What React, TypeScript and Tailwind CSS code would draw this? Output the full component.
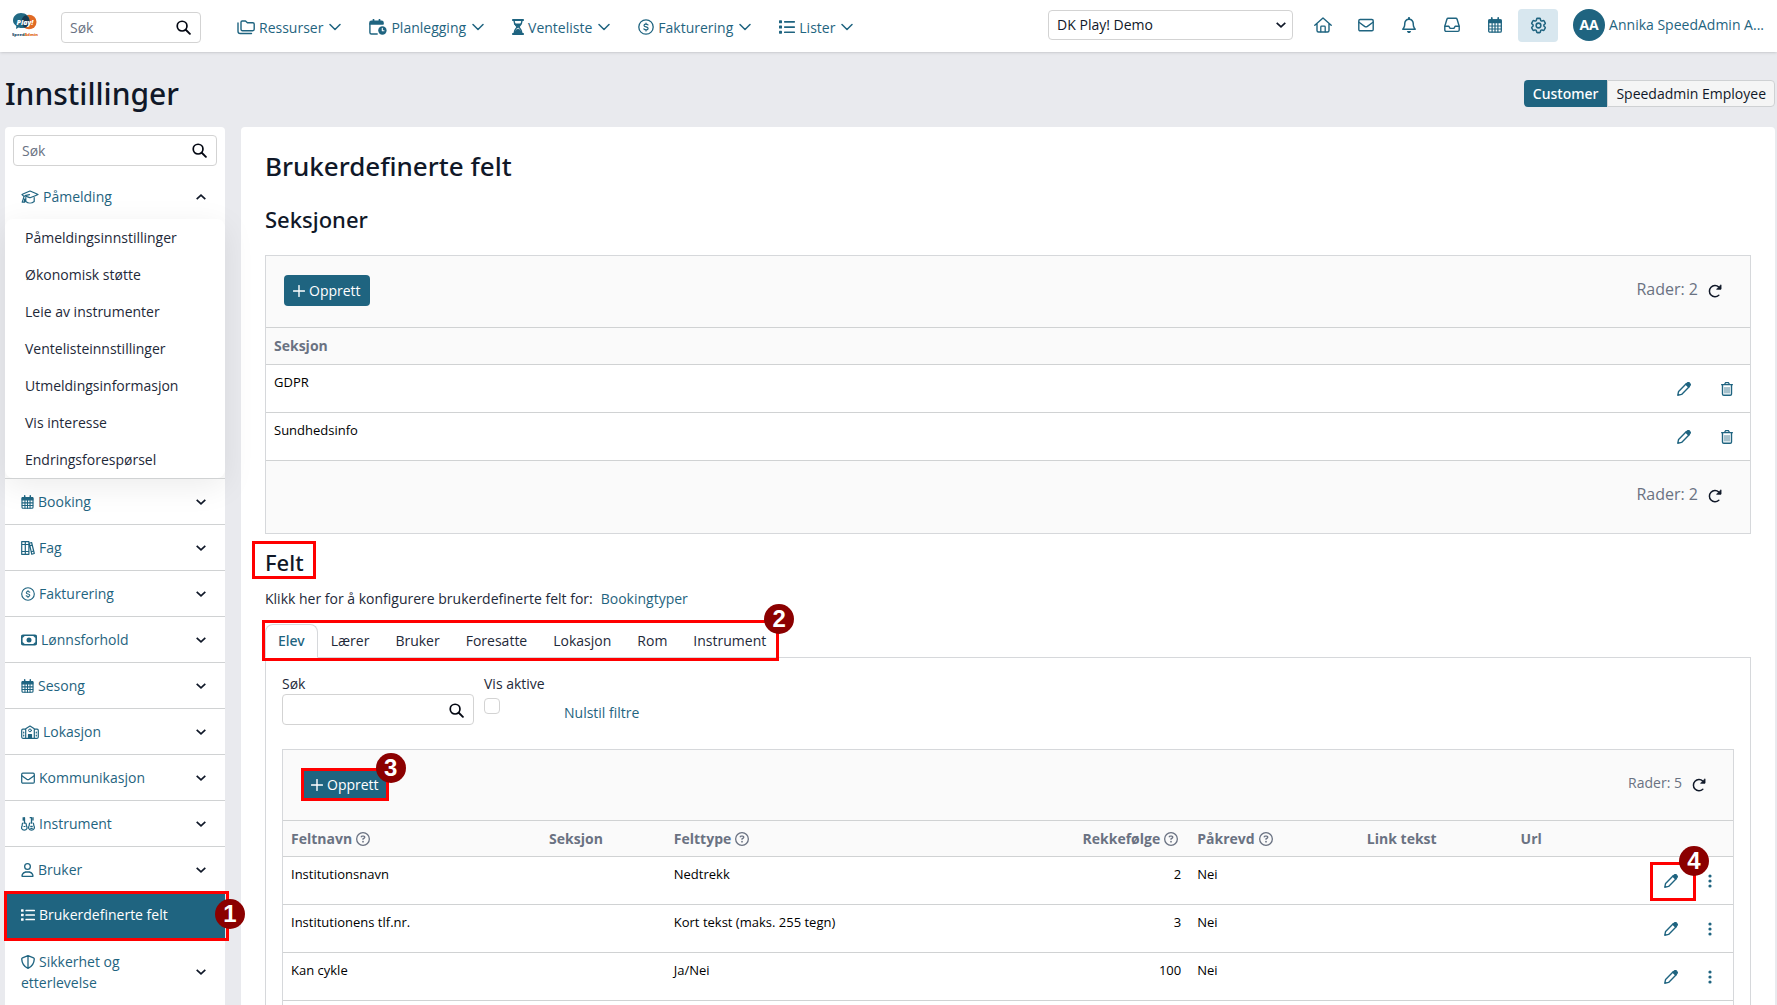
import type { ReactNode } from 'react';
import { FaRegBell, FaRegCircleQuestion, FaRegUser } from 'react-icons/fa6';
import { HiOutlineCog6Tooth } from 'react-icons/hi2';

interface IconProps {
  className?: string;
}

interface SvgProps extends IconProps {
  viewBox?: string;
  children: ReactNode;
}

function Svg({ className = 'w-4 h-4', viewBox = '0 0 16 16', children }: SvgProps) {
  return (
    <svg
      className={`shrink-0 ${className}`}
      viewBox={viewBox}
      fill="none"
      stroke="currentColor"
      strokeWidth="1.4"
      strokeLinecap="round"
      strokeLinejoin="round"
      aria-hidden="true"
    >
      {children}
    </svg>
  );
}

function SearchIcon({ className }: IconProps) {
  return (
    <Svg className={className}>
      <circle cx="6.5" cy="6.5" r="5.2" strokeWidth="1.8" />
      <path d="M10.4 10.4 14.8 14.8" strokeWidth="2" />
    </Svg>
  );
}

function FoldersIcon({ className = 'w-[18px] h-4' }: IconProps) {
  return (
    <Svg className={className} viewBox="0 0 18 16">
      <path d="M4 10V3.2C4 2.4 4.5 2 5.2 2h3.3l1.9 1.8h5.4c.8 0 1.4.5 1.4 1.3v5.2c0 .8-.6 1.4-1.4 1.4H5.4C4.6 11.7 4 11 4 10z" />
      <path d="M1 4v8.3c0 1.3.9 2.2 2.2 2.2h11.3" />
    </Svg>
  );
}

function CalendarClockIcon({ className = 'w-[18px] h-4' }: IconProps) {
  return (
    <Svg className={className} viewBox="0 0 18 16">
      <path d="M4.5 .8v2M10.5 .8v2" strokeWidth="1.8" />
      <path d="M.9 5V3.7c0-.9.6-1.5 1.5-1.5h10.2c.9 0 1.5.6 1.5 1.5V5z" fill="currentColor" />
      <path d="M.9 5v8.5c0 .9.6 1.5 1.5 1.5h5.8" />
      <circle cx="13.4" cy="11.5" r="4.2" fill="currentColor" stroke="none" />
      <path d="M13.3 9.3v2.4h1.7" stroke="white" strokeWidth="1.1" />
    </Svg>
  );
}

function HourglassIcon({ className = 'w-3 h-4' }: IconProps) {
  return (
    <Svg className={className} viewBox="0 0 12 16">
      <path d="M.8 1h10.4M.8 15h10.4" strokeWidth="1.8" />
      <path d="M2 1.500c0 3.500 1.500 4.500 3.200 6.500C3.500 10 2 11 2 14.500M10 1.500c0 3.500-1.500 4.500-3.200 6.500 1.700 2 3.200 3 3.200 6.500" />
      <path d="M3 5h6L6 8.500zM2.200 14.500c.3-2.500 1.800-3.500 3.800-4.500 2 1 3.500 2 3.800 4.500z" fill="currentColor" strokeWidth="1" />
    </Svg>
  );
}

function DollarIcon({ className }: IconProps) {
  return (
    <Svg className={className}>
      <circle cx="8" cy="8" r="7.2" strokeWidth="1.3" />
      <path d="M10 5.9C9.3 5.3 8.5 5.2 7.800 5.200c-1.100 0-1.800.5-1.800 1.300 0 2 4.100.8 4.100 2.900 0 .9-.8 1.400-1.900 1.400-.9 0-1.700-.3-2.300-.8M8 4v1.100M8 10.900V12" strokeWidth="1.2" />
    </Svg>
  );
}

function ListIcon({ className }: IconProps) {
  return (
    <Svg className={className}>
      <g fill="currentColor" stroke="none">
        <rect x="0" y="1.3" width="3" height="3" rx=".6" />
        <rect x="0" y="6.5" width="3" height="3" rx=".6" />
        <rect x="0" y="11.7" width="3" height="3" rx=".6" />
        <rect x="5" y="2" width="11" height="1.7" rx=".6" />
        <rect x="5" y="7.2" width="11" height="1.7" rx=".6" />
        <rect x="5" y="12.4" width="11" height="1.7" rx=".6" />
      </g>
    </Svg>
  );
}

function HomeIcon({ className = 'w-[18px] h-4' }: IconProps) {
  return (
    <Svg className={className} viewBox="0 0 18 16">
      <path d="M.8 8.2 9 .9l8.200 7.300M3 6.800v6.700c0 .9.6 1.5 1.5 1.5h9c.9 0 1.5-.6 1.5-1.500V6.800" />
      <path d="M6.800 14.800V10c0-.5.3-.8.8-.8h2.800c.5 0 .8.3.8.8v4.800" strokeWidth="1.3" />
    </Svg>
  );
}

function EnvelopeIcon({ className }: IconProps) {
  return (
    <Svg className={className}>
      <rect x=".8" y="2.5" width="14.4" height="11.3" rx="1.3" />
      <path d="M1 5.3 6.600 9.400c.9.6 1.900.6 2.800 0L15 5.300" />
    </Svg>
  );
}

function InboxIcon({ className }: IconProps) {
  return (
    <Svg className={className}>
      <path d="M.8 9.300 2.900 2.200c.2-.6.6-.9 1.200-.9h7.800c.6 0 1 .3 1.200.9l2.100 7.100v3.800c0 .8-.5 1.300-1.300 1.300H2.100c-.8 0-1.300-.5-1.300-1.300z" />
      <path d="M1 9.300h3.900l1.200 2.100h3.800l1.200-2.100H15" />
    </Svg>
  );
}

function CalendarIcon({ className = 'w-[14px] h-4' }: IconProps) {
  return (
    <Svg className={className} viewBox="0 0 14 16">
      <path d="M3.8 .9v2.500M10.200 .9v2.500" strokeWidth="1.7" />
      <rect x=".7" y="2.8" width="12.600" height="12.4" rx="1.2" strokeWidth="1.3" />
      <path d="M1 3h12v2.600H1z" fill="currentColor" />
      <path d="M1 9h12M1 12h12M4.100 6v9M7 6v9M9.900 6v9" strokeWidth="1.2" />
    </Svg>
  );
}

function GraduationIcon({ className = 'w-[18px] h-[14px]' }: IconProps) {
  return (
    <Svg className={className} viewBox="0 0 18 14">
      <path d="M2.600 6.100 1 4.500c2.600-1.300 5.300-2.300 8-3.500 2.700 1.200 5.300 2.200 8 3.500-2.600 1.300-5.300 2.300-8 3.300-1.600-.6-3-1.200-4.600-1.800" strokeWidth="1.2" />
      <path d="M8.500 4.600 4 5.700c-1.200.4-1.500 1.600-1.600 3l-1.200 3.500h2.400V9M4.800 7.500v4c2.400 2 6 2 8.400 0v-4" strokeWidth="1.2" />
    </Svg>
  );
}

function BooksIcon({ className = 'w-[14px] h-[14px]' }: IconProps) {
  return (
    <Svg className={className} viewBox="0 0 14 14">
      <path d="M.7 .7h3.600v12.600H.7zM4.300 .7h3.600v12.600H4.300zM.7 3.500h7.200M.7 10.500h7.200M8.300 2.300l2.300-.8 2.700 11-2.500.8zM8.900 4.800l2.300-.7M10.300 10.700l2.300-.7" strokeWidth="1.2" />
    </Svg>
  );
}

function MoneyIcon({ className = 'w-4 h-3' }: IconProps) {
  return (
    <Svg className={className} viewBox="0 0 16 12">
      <rect x=".8" y="1.2" width="14.4" height="9.6" rx="1.2" strokeWidth="1.6" />
      <circle cx="8" cy="6" r="2.5" fill="currentColor" stroke="none" />
      <path d="M1.200 3.500c1.100 0 2-.8 2-2h-2zM14.800 3.500c-1.100 0-2-.8-2-2h2zM1.200 8.500c1.100 0 2 .8 2 2h-2zM14.800 8.500c-1.100 0-2 .8-2 2h2z" fill="currentColor" strokeWidth=".6" />
    </Svg>
  );
}

function SchoolIcon({ className = 'w-[18px] h-[14px]' }: IconProps) {
  return (
    <Svg className={className} viewBox="0 0 18 14">
      <path d="M4.700 13.300V3.800L9 1l4.300 2.800v9.500M4.700 4.200H1.900c-.7 0-1.200.5-1.200 1.200v6.700c0 .7.5 1.200 1.200 1.200h14.200c.7 0 1.200-.5 1.200-1.200V5.400c0-.7-.5-1.200-1.200-1.200h-2.800" strokeWidth="1.2" />
      <circle cx="9" cy="5.4" r="1.4" strokeWidth="1" />
      <path d="M7.500 13V9.500h3V13zM2.700 7v1M2.700 10v1M15.300 7v1M15.300 10v1" fill="currentColor" strokeWidth="1.2" />
    </Svg>
  );
}

function GuitarsIcon({ className = 'w-[14px] h-[14px]' }: IconProps) {
  return (
    <Svg className={className} viewBox="0 0 14 14">
      <path d="M3.500 .7v5.500M2.200 .7v2.500M10.500 .7v5.500M12 .7v2.300M9.200 .7h1.300" strokeWidth="1.3" />
      <path d="M2 6.200c-1.400.2-.4 1.800-1 2.900-1 1.800-.3 4.100 2.300 4.100s3.300-2.300 2.300-4.100c-.6-1.100.2-2.600-1.100-2.900M9 6c-1.300.7-.4 2-1 3-1 1.900 0 4.200 2.500 4.200S14 10.900 13 9c-.6-1.100.1-2.500-1-3M3 9.500h1M9.700 9.300h1.600M9.700 11.300h1.600" strokeWidth="1.2" />
    </Svg>
  );
}

function ShieldIcon({ className = 'w-[14px] h-[14px]' }: IconProps) {
  return (
    <Svg className={className} viewBox="0 0 14 14">
      <path d="M7 .7 12.500 2.800c.5.2.8.6.8 1.100-.2 4.200-2.300 7.700-6.300 9.400C3 11.600.9 8.100.7 3.900c0-.5.3-.9.8-1.100zM7 1v12" strokeWidth="1.3" />
    </Svg>
  );
}

function PencilIcon({ className = 'w-[14px] h-[14px]' }: IconProps) {
  return (
    <Svg className={className} viewBox="0 0 14 14">
      <path d="M.8 13.200 1.600 9.400 9.200 1.800 12.200 4.800 4.600 12.400z" strokeWidth="1.4" />
      <path d="M8.800 2.300 10.300 .9c.7-.6 1.500-.6 2.100 0l.6.7c.6.600.6 1.400 0 2l-1.400 1.500z" fill="currentColor" strokeWidth="1.1" />
    </Svg>
  );
}

function TrashIcon({ className = 'w-3 h-[14px]' }: IconProps) {
  return (
    <Svg className={className} viewBox="0 0 12 14">
      <path d="M.6 2.700h10.800M3.600 2.500 4.300 1c.1-.3.3-.4.6-.4h2.200c.3 0 .5.1.6.4l.7 1.500" strokeWidth="1.3" />
      <path d="M1.500 3v9c0 .8.5 1.300 1.300 1.300h6.400c.8 0 1.300-.5 1.300-1.300V3" strokeWidth="1.4" />
      <path d="M4 5.500v5.500M6 5.500v5.500M8 5.500v5.500" strokeWidth="1" opacity=".8" />
    </Svg>
  );
}

function ReloadIcon({ className = 'w-[14px] h-[14px]' }: IconProps) {
  return (
    <Svg className={className} viewBox="0 0 14 14">
      <path d="M10.800 3A5.600 5.600 0 1 0 10.800 11.300" strokeWidth="1.5" />
      <path d="M13 1.200v4H9z" fill="currentColor" strokeWidth=".9" />
    </Svg>
  );
}

function PlusIcon({ className = 'w-3 h-3' }: IconProps) {
  return (
    <Svg className={className} viewBox="0 0 12 12">
      <path d="M6 .6v10.800M.6 6h10.800" strokeWidth="1.4" />
    </Svg>
  );
}

function DotsIcon({ className = 'w-1 h-[14px]' }: IconProps) {
  return (
    <Svg className={className} viewBox="0 0 4 14">
      <g fill="currentColor" stroke="none">
        <circle cx="2" cy="2" r="1.600" />
        <circle cx="2" cy="7" r="1.600" />
        <circle cx="2" cy="12" r="1.600" />
      </g>
    </Svg>
  );
}

function ChevronIcon({ className = 'w-3 h-2' }: IconProps) {
  return (
    <Svg className={className} viewBox="0 0 12 8">
      <path d="M1 1.500 6 6.500 11 1.500" strokeWidth="1.5" />
    </Svg>
  );
}

function SmallChevron({ up = false }: { up?: boolean }) {
  return (
    <svg className="w-[10px] h-[6px] shrink-0 text-gray-900" viewBox="0 0 10 6" fill="none" stroke="currentColor" strokeWidth="1.7" aria-hidden="true">
      <path d={up ? 'M.7 5.200 5 1.200 9.300 5.200' : 'M.7 .8 5 4.800 9.300 .8'} />
    </svg>
  );
}

function Logo() {
  return (
    <svg className="w-[26px] h-6" viewBox="0 0 26 24" aria-label="SpeedAdmin Play!">
      <ellipse cx="17" cy="9" rx="7.500" ry="7.300" fill="#e06a25" />
      <path d="M9 0c5 0 8.500 3.200 8.500 7.700 0 4.300-3 7.300-7.500 7.300-1.300 0-2.300-.2-3.300-.6L4 16l.3-3C2.300 11.600 1 9.800 1 7.500 1 3.200 4.500 0 9 0z" fill="#226a84" />
      <path d="M13.500 2.300c2.500 1.200 4 3.100 4 5.600 0 3.600-2 6-4.500 6.900-2.500-1.500-3.500-3.500-3.500-6.200 0-2.800 1.500-5.100 4-6.300z" fill="#173a50" />
      <text x="13" y="11.500" textAnchor="middle" fontFamily="Open Sans, sans-serif" fontSize="7" fontStyle="italic" fontWeight="800" fill="white">Play!</text>
      <text x="13" y="22.500" textAnchor="middle" fontFamily="Open Sans, sans-serif" fontSize="4" fontWeight="800" fill="#1d4e6b">Speed<tspan fill="#e06a25">Admin</tspan></text>
    </svg>
  );
}

// Numbered badge used by the guide markers
function Badge({ n, className }: { n: number; className: string }) {
  return (
    <span className={`absolute z-20 flex items-center justify-center w-[30px] h-[30px] rounded-full bg-[#8b0000] text-white text-2xl leading-none font-bold font-['Liberation_Sans',sans-serif] ${className}`}>
      {n}
    </span>
  );
}

function Marker({ className }: { className: string }) {
  return <span className={`absolute z-10 border-3 border-[#ff0000] pointer-events-none ${className}`} />;
}

const navItems = [
  { label: 'Ressurser', Icon: FoldersIcon },
  { label: 'Planlegging', Icon: CalendarClockIcon },
  { label: 'Venteliste', Icon: HourglassIcon },
  { label: 'Fakturering', Icon: DollarIcon },
  { label: 'Lister', Icon: ListIcon },
];

const shortcuts = [
  { label: 'Hjem', Icon: HomeIcon, size: 'w-[18px] h-4' },
  { label: 'Meldinger', Icon: EnvelopeIcon, size: 'w-4 h-4' },
  { label: 'Varsler', Icon: FaRegBell, size: 'w-4 h-4' },
  { label: 'Innboks', Icon: InboxIcon, size: 'w-4 h-4' },
  { label: 'Kalender', Icon: CalendarIcon, size: 'w-[14px] h-4' },
];

const enrollmentItems = [
  'Påmeldingsinnstillinger',
  'Økonomisk støtte',
  'Leie av instrumenter',
  'Ventelisteinnstillinger',
  'Utmeldingsinformasjon',
  'Vis interesse',
  'Endringsforespørsel',
];

const menuItems = [
  { label: 'Booking', Icon: CalendarIcon, size: 'w-[13px] h-[14px]' },
  { label: 'Fag', Icon: BooksIcon, size: 'w-[14px] h-[14px]' },
  { label: 'Fakturering', Icon: DollarIcon, size: 'w-[14px] h-[14px]' },
  { label: 'Lønnsforhold', Icon: MoneyIcon, size: 'w-4 h-3' },
  { label: 'Sesong', Icon: CalendarIcon, size: 'w-[13px] h-[14px]' },
  { label: 'Lokasjon', Icon: SchoolIcon, size: 'w-[18px] h-[14px]' },
  { label: 'Kommunikasjon', Icon: EnvelopeIcon, size: 'w-[14px] h-[14px]' },
  { label: 'Instrument', Icon: GuitarsIcon, size: 'w-[14px] h-[14px]' },
  { label: 'Bruker', Icon: FaRegUser, size: 'w-[13px] h-[14px]' },
];

const sections = ['GDPR', 'Sundhedsinfo'];

const tabs = ['Elev', 'Lærer', 'Bruker', 'Foresatte', 'Lokasjon', 'Rom', 'Instrument'];

const fields = [
  { name: 'Institutionsnavn', type: 'Nedtrekk', order: 2, required: 'Nei' },
  { name: 'Institutionens tlf.nr.', type: 'Kort tekst (maks. 255 tegn)', order: 3, required: 'Nei' },
  { name: 'Kan cykle', type: 'Ja/Nei', order: 100, required: 'Nei' },
  { name: '', type: '', order: null, required: '' },
];

function Header() {
  return (
    <header className="relative z-10 flex items-center h-13 shrink-0 bg-white pl-3 pr-[13px] pt-[2px] shadow-sm text-[#1f6480]">
      <a href="#" className="mr-[23px] -mt-1">
        <Logo />
      </a>
      <div className="relative w-[140px]">
        <input
          type="text"
          placeholder="Søk"
          aria-label="Søk"
          className="block w-full h-[31px] px-2 border border-[#d3d3d3] rounded-sm text-gray-900 placeholder:text-gray-500"
        />
        <SearchIcon className="absolute right-[10px] top-2 w-[15px] h-[15px] text-gray-950" />
      </div>
      <nav className="flex items-center gap-7 ml-9">
        {navItems.map(({ label, Icon }) => (
          <button key={label} type="button" className="flex items-center gap-1">
            <Icon />
            <span className="leading-[21px]">{label}</span>
            <ChevronIcon className="w-3 h-2 ml-[2px]" />
          </button>
        ))}
      </nav>
      <div className="relative w-[245px] ml-auto mr-2 -mt-1">
        <select
          aria-label="Skole"
          className="block w-full h-[30px] pl-2 pr-8 border border-[#d3d3d3] rounded-sm bg-white text-gray-900 appearance-none"
        >
          <option>DK Play! Demo</option>
        </select>
        <span className="absolute right-[7px] top-3 pointer-events-none">
          <SmallChevron />
        </span>
      </div>
      <div className="flex items-center -mt-1">
        {shortcuts.map(({ label, Icon, size }) => (
          <button key={label} type="button" aria-label={label} className="flex items-center justify-center w-[43px]">
            <Icon className={size} />
          </button>
        ))}
        <button type="button" aria-label="Innstillinger" className="flex items-center justify-center w-10 h-[33px] ml-[2px] rounded-sm bg-[#d8e7ef]">
          <HiOutlineCog6Tooth className="w-[19px] h-[19px]" strokeWidth={1.9} />
        </button>
        <button type="button" className="flex items-center gap-1 ml-[15px]">
          <span className="flex items-center justify-center w-8 h-8 rounded-full bg-[#1f6480] text-white font-bold">AA</span>
          <span className="whitespace-nowrap">Annika SpeedAdmin A...</span>
        </button>
      </div>
    </header>
  );
}

function Sidebar() {
  return (
    <aside className="w-[220px] shrink-0 bg-white rounded-t-sm">
      <div className="relative mx-2 mt-2">
        <input
          type="text"
          placeholder="Søk"
          aria-label="Søk i innstillinger"
          className="block w-full h-[31px] px-2 border border-[#d3d3d3] rounded-sm placeholder:text-gray-500"
        />
        <SearchIcon className="absolute right-[10px] top-2 w-[15px] h-[15px] text-gray-950" />
      </div>
      <button type="button" className="flex items-center gap-1 w-full h-[45px] mt-2 pl-4 pr-[19px] text-[#1f6480]">
        <GraduationIcon />
        <span className="mr-auto">Påmelding</span>
        <SmallChevron up />
      </button>
      <ul className="relative bg-white rounded-lg shadow-[0_8px_32px_rgba(0,0,0,0.08)]">
        {enrollmentItems.map((item) => (
          <li key={item}>
            <a href="#" className="block px-5 py-2 leading-[21px] text-gray-800">{item}</a>
          </li>
        ))}
      </ul>
      {menuItems.map(({ label, Icon, size }) => (
        <button key={label} type="button" className="relative flex items-center gap-1 w-full h-[46px] pl-4 pr-[19px] border-t border-[#d0d2d3] text-[#1f6480]">
          <Icon className={size} />
          <span className="mr-auto">{label}</span>
          <SmallChevron />
        </button>
      ))}
      <a href="#" className="relative flex items-center gap-1 h-[46px] pl-4 bg-[#1f6480] text-white">
        <ListIcon className="w-[14px] h-[14px]" />
        <span>Brukerdefinerte felt</span>
        <Marker className="-left-px -right-1 -top-px -bottom-[3px]" />
        <Badge n={1} className="-right-5 top-[7px]" />
      </a>
      <button type="button" className="flex items-center w-full mt-[13px] pl-4 pr-[19px] text-left text-[#1f6480] leading-[21px]">
        <span className="w-[120px] mr-auto">
          <ShieldIcon className="inline-block w-[14px] h-[14px] mr-1 -mt-[2px]" />
          Sikkerhet og etterlevelse
        </span>
        <SmallChevron />
      </button>
    </aside>
  );
}

function CreateButton() {
  return (
    <button type="button" className="flex items-center gap-1 h-[31px] px-[9px] rounded-sm bg-[#1f6480] text-white">
      <PlusIcon />
      Opprett
    </button>
  );
}

function RowCount({ count, className }: { count: number; className: string }) {
  return (
    <div className={`flex items-center gap-[10px] ml-auto text-gray-500 ${className}`}>
      Rader: {count}
      <button type="button" aria-label="Oppdater" className="mt-[3px] text-gray-900">
        <ReloadIcon />
      </button>
    </div>
  );
}

function IconButton({ label, children }: { label: string; children: ReactNode }) {
  return (
    <button type="button" aria-label={label} className="flex items-center justify-center w-8 h-8 text-[#1f6480]">
      {children}
    </button>
  );
}

function SectionsTable() {
  return (
    <div className="mt-5 border border-[#d6d8db] bg-[#fafafa]">
      <div className="flex items-start h-[71px] pt-[19px] pl-[18px] pr-7">
        <CreateButton />
        <RowCount count={2} className="text-base leading-7" />
      </div>
      <table className="w-full">
        <thead>
          <tr className="h-[37px] border-t border-[#d0d2d3] text-left text-gray-500">
            <th className="px-2 font-bold">Seksjon</th>
            <th className="w-[110px]" aria-label="Handlinger" />
          </tr>
        </thead>
        <tbody className="bg-white">
          {sections.map((section) => (
            <tr key={section} className="h-12 border-y border-[#d0d2d3] align-top text-[13px] text-black">
              <td className="px-2 py-[7px] leading-5">{section}</td>
              <td className="pt-2 pb-[7px]">
                <div className="flex justify-end gap-[11px] pr-[7px]">
                  <IconButton label="Rediger"><PencilIcon /></IconButton>
                  <IconButton label="Slett"><TrashIcon /></IconButton>
                </div>
              </td>
            </tr>
          ))}
        </tbody>
      </table>
      <div className="flex items-start h-[72px] pt-[19px] pr-7">
        <RowCount count={2} className="text-base leading-7" />
      </div>
    </div>
  );
}

function HelpHeading({ children }: { children: ReactNode }) {
  return (
    <span className="inline-flex items-center gap-1">
      {children}
      <FaRegCircleQuestion className="w-[14px] h-[14px]" />
    </span>
  );
}

function FieldsTable() {
  return (
    <div className="mt-6 border border-[#d6d8db] bg-[#fafafa]">
      <div className="flex items-start h-[70px] pt-[19px] pl-[19px] pr-[27px]">
        <div className="relative">
          <CreateButton />
          <Marker className="-inset-px" />
          <Badge n={3} className="-right-[18px] -top-4" />
        </div>
        <RowCount count={5} className="leading-7" />
      </div>
      <table className="w-full table-fixed">
        <colgroup>
          <col className="w-[17.8%]" />
          <col className="w-[8.6%]" />
          <col className="w-[27.5%]" />
          <col className="w-[8.6%]" />
          <col className="w-[11.7%]" />
          <col className="w-[10.6%]" />
          <col />
          <col className="w-[100px]" />
        </colgroup>
        <thead>
          <tr className="h-[36px] border-t border-[#d0d2d3] text-left text-gray-500">
            <th className="px-2 font-bold"><HelpHeading>Feltnavn</HelpHeading></th>
            <th className="px-2 font-bold">Seksjon</th>
            <th className="px-2 font-bold"><HelpHeading>Felttype</HelpHeading></th>
            <th className="pr-[11px] font-bold text-right whitespace-nowrap"><HelpHeading>Rekkefølge</HelpHeading></th>
            <th className="px-2 font-bold"><HelpHeading>Påkrevd</HelpHeading></th>
            <th className="px-2 font-bold">Link tekst</th>
            <th className="px-2 font-bold">Url</th>
            <th aria-label="Handlinger" />
          </tr>
        </thead>
        <tbody className="bg-white">
          {fields.map((field, i) => (
            <tr key={i} className="h-12 border-t border-[#d0d2d3] align-top text-[13px] leading-5 text-black">
              <td className="px-2 py-[7px]">{field.name}</td>
              <td />
              <td className="px-2 py-[7px]">{field.type}</td>
              <td className="px-2 py-[7px] text-right">{field.order}</td>
              <td className="px-2 py-[7px]">{field.required}</td>
              <td />
              <td />
              <td className="pt-2 pb-[7px]">
                <div className="flex justify-end gap-[7px] pr-[7px]">
                  <div className="relative">
                    <IconButton label="Rediger"><PencilIcon /></IconButton>
                    {i === 0 && (
                      <>
                        <Marker className="-left-[5px] -right-[9px] -top-[3px] -bottom-1" />
                        <Badge n={4} className="-right-[22px] -top-[19px]" />
                      </>
                    )}
                  </div>
                  <IconButton label="Mer"><DotsIcon /></IconButton>
                </div>
              </td>
            </tr>
          ))}
        </tbody>
      </table>
    </div>
  );
}

function FieldsSection() {
  return (
    <section>
      <h3 className="relative w-fit mt-[14px] font-['Noto_Sans',sans-serif] text-[22px] leading-7 font-medium">
        Felt
        <Marker className="-left-[13px] -right-3 -top-[7px] -bottom-[3px]" />
      </h3>
      <p className="mt-3 leading-[21px] text-gray-800">
        Klikk her for å konfigurere brukerdefinerte felt for:
        <a href="#" className="ml-2 text-[#1f6480]">Bookingtyper</a>
      </p>
      <div className="relative flex w-fit mt-[15px] -mb-px">
        {tabs.map((tab, i) => (
          <button
            key={tab}
            type="button"
            className={
              i === 0
                ? "h-[34px] px-3 rounded-t-lg border border-b-white border-[#d6d8db] bg-white font-['Noto_Sans',sans-serif] font-medium text-[#1f6480]"
                : 'h-[34px] px-[13px] text-gray-800'
            }
          >
            {tab}
          </button>
        ))}
        <Marker className="-left-[3px] right-0 -top-1 -bottom-[3px]" />
        <Badge n={2} className="-right-[15px] -top-5" />
      </div>
      <div className="px-4 pt-4 border border-[#d6d8db]">
        <div className="flex text-gray-800">
          <div className="w-[192px]">
            <label htmlFor="field-search" className="block leading-5">Søk</label>
            <div className="relative">
              <input id="field-search" type="text" className="block w-full h-[31px] px-2 border border-[#d3d3d3] rounded-sm" />
              <SearchIcon className="absolute right-[10px] top-[9px] w-[15px] h-[15px] text-gray-950" />
            </div>
          </div>
          <div className="w-20 ml-[10px]">
            <label htmlFor="show-active" className="block leading-5">Vis aktive</label>
            <input id="show-active" type="checkbox" className="block w-4 h-4 mt-1 border border-[#d3d3d3] rounded-sm appearance-none" />
          </div>
          <a href="#" className="mt-7 leading-[21px] text-[#1f6480]">Nulstil filtre</a>
        </div>
        <FieldsTable />
      </div>
    </section>
  );
}

export default function App() {
  return (
    <div className="flex flex-col h-screen overflow-hidden bg-[#e9eaee] font-['Open_Sans','Noto_Sans',sans-serif] text-sm text-gray-900">
      <Header />
      <div className="flex items-center justify-between h-[75px] shrink-0 pl-[5px] pr-[2px] pt-2">
        <h1 className="font-['Noto_Sans',sans-serif] text-[30px] leading-9 font-medium">Innstillinger</h1>
        <div className="flex h-[27px]">
          <button type="button" className="px-[9px] rounded-l-sm bg-[#1f6480] font-['Noto_Sans',sans-serif] font-medium text-white">Customer</button>
          <button type="button" className="px-2 border border-[#cfd1d3] rounded-r-sm bg-[#f5f5f5]">Speedadmin Employee</button>
        </div>
      </div>
      <div className="flex flex-1 min-h-0 gap-4 pl-[5px] pr-[2px]">
        <Sidebar />
        <main className="flex-1 min-w-0 px-6 pt-[21px] bg-white rounded-t-sm">
          <h2 className="font-['Noto_Sans',sans-serif] text-[26px] leading-9 font-medium">Brukerdefinerte felt</h2>
          <h3 className="mt-[21px] mb-[22px] font-['Noto_Sans',sans-serif] text-[22px] leading-7 font-medium">Seksjoner</h3>
          <SectionsTable />
          <FieldsSection />
        </main>
      </div>
    </div>
  );
}
